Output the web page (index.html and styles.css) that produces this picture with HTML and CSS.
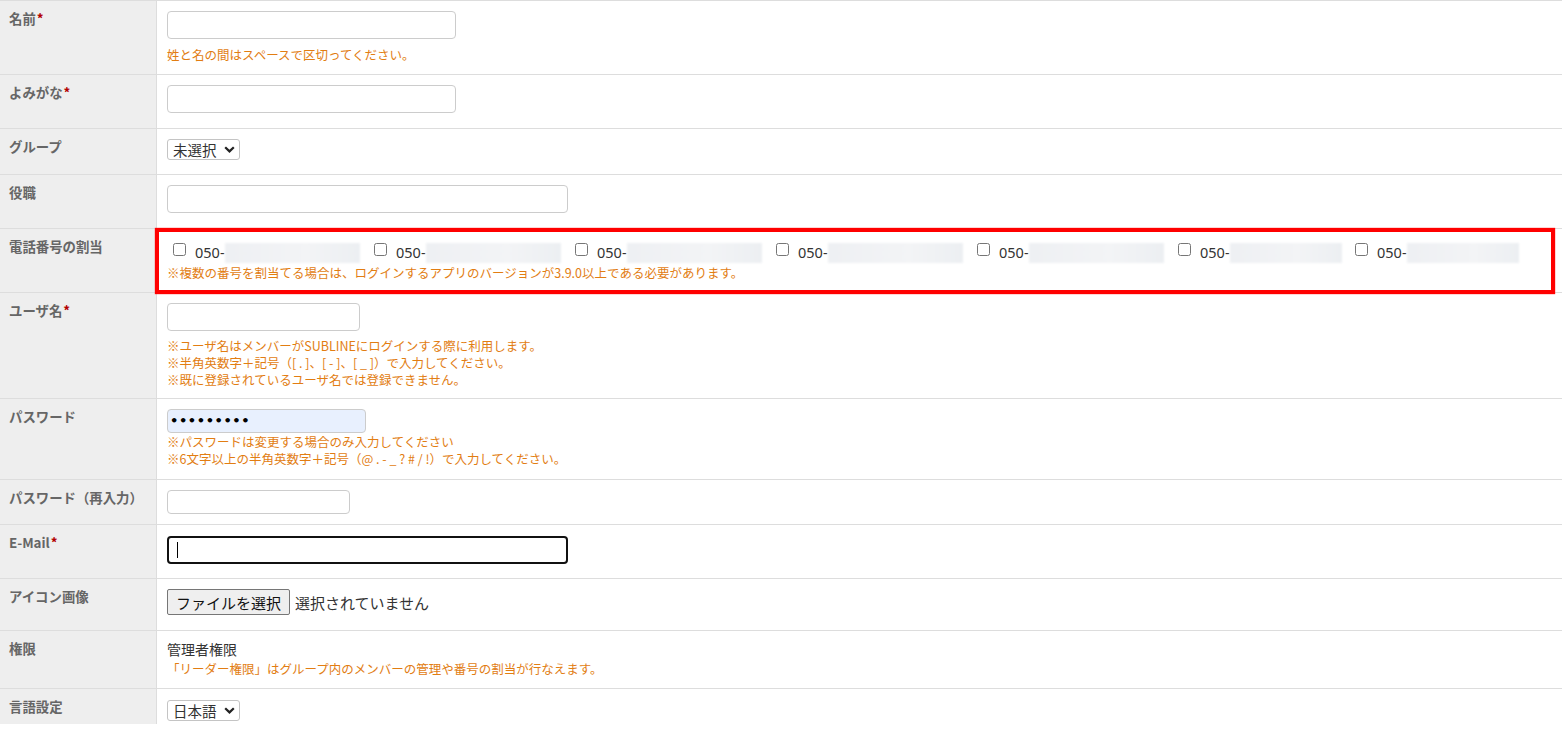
FILE: index.html
```html
<!DOCTYPE html>
<html lang="ja">
<head>
  <meta charset="UTF-8">
  <title>メンバー編集</title>
  <link rel="stylesheet" href="styles.css">
</head>
<body>
  <table class="form-table">
    <tr>
      <th>名前<span class="req">*</span></th>
      <td>
        <input type="text" class="field w-name">
        <p class="note single">姓と名の間はスペースで区切ってください。</p>
      </td>
    </tr>
    <tr>
      <th>よみがな<span class="req">*</span></th>
      <td><input type="text" class="field w-name solo"></td>
    </tr>
    <tr>
      <th>グループ</th>
      <td>
        <span class="select solo-select">未選択
          <svg width="11" height="7" viewBox="0 0 11 7"><path d="M1.2 1.2 L5.5 5.4 L9.8 1.2" fill="none" stroke="#222" stroke-width="2.2"/></svg>
        </span>
      </td>
    </tr>
    <tr>
      <th>役職</th>
      <td><input type="text" class="field w-wide solo"></td>
    </tr>
    <tr>
      <th>電話番号の割当</th>
      <td class="assign">
        <div class="phones">
          <label class="phone"><input type="checkbox"><span class="num">050-</span><span class="blur"></span></label>
          <label class="phone"><input type="checkbox"><span class="num">050-</span><span class="blur"></span></label>
          <label class="phone"><input type="checkbox"><span class="num">050-</span><span class="blur"></span></label>
          <label class="phone"><input type="checkbox"><span class="num">050-</span><span class="blur"></span></label>
          <label class="phone"><input type="checkbox"><span class="num">050-</span><span class="blur"></span></label>
          <label class="phone short"><input type="checkbox"><span class="num">050-</span><span class="blur"></span></label>
          <label class="phone short"><input type="checkbox"><span class="num">050-</span><span class="blur"></span></label>
        </div>
        <p class="note">※複数の番号を割当てる場合は、ログインするアプリのバージョンが3.9.0以上である必要があります。</p>
        <span class="mark"></span>
      </td>
    </tr>
    <tr>
      <th>ユーザ名<span class="req">*</span></th>
      <td>
        <input type="text" class="field w-user">
        <div class="notes spaced">
          <p>※ユーザ名はメンバーがSUBLINEにログインする際に利用します。</p>
          <p>※半角英数字＋記号（[ . ]、[ - ]、[ _ ]）で入力してください。</p>
          <p>※既に登録されているユーザ名では登録できません。</p>
        </div>
      </td>
    </tr>
    <tr>
      <th>パスワード</th>
      <td>
        <div class="field short-field w-pass autofill">•••••••••</div>
        <div class="notes tight">
          <p>※パスワードは変更する場合のみ入力してください</p>
          <p>※6文字以上の半角英数字＋記号（@ . - _ ? # / !）で入力してください。</p>
        </div>
      </td>
    </tr>
    <tr>
      <th>パスワード（再入力）</th>
      <td><input type="password" class="field short-field w-repass"></td>
    </tr>
    <tr>
      <th>E-Mail<span class="req">*</span></th>
      <td>
        <span class="focus-wrap">
          <input type="text" class="field w-wide focused">
          <span class="caret"></span>
        </span>
      </td>
    </tr>
    <tr>
      <th>アイコン画像</th>
      <td>
        <div class="file solo">
          <button type="button" class="file-btn">ファイルを選択</button>
          <span class="file-name">選択されていません</span>
        </div>
      </td>
    </tr>
    <tr>
      <th>権限</th>
      <td class="role">
        <p class="role-name">管理者権限</p>
        <p class="note">「リーダー権限」はグループ内のメンバーの管理や番号の割当が行なえます。</p>
      </td>
    </tr>
    <tr class="last">
      <th>言語設定</th>
      <td class="lang">
        <span class="select">日本語
          <svg width="11" height="7" viewBox="0 0 11 7"><path d="M1.2 1.2 L5.5 5.4 L9.8 1.2" fill="none" stroke="#222" stroke-width="2.2"/></svg>
        </span>
      </td>
    </tr>
  </table>
</body>
</html>
```

FILE: styles.css
```css
body {
  margin: 0;
  font-family: "Noto Sans CJK JP", "Noto Sans", sans-serif;
  color: #333;
  background: #fff;
  overflow: hidden;
}

.form-table {
  width: 100%;
  border-collapse: separate;
  border-spacing: 0;
}

.form-table th,
.form-table td {
  border-top: 1px solid #ddd;
  vertical-align: top;
  text-align: left;
  box-sizing: border-box;
}

.form-table th {
  width: 157px;
  padding: 7px 9px 8px;
  background: #eee;
  border-right: 1px solid #ddd;
  color: #666;
  font-size: 13.4px;
  line-height: 20px;
  font-weight: bold;
}

.form-table td {
  padding: 10px 10px 10px;
}

.req {
  color: #b30000;
  margin-left: 1px;
}

p {
  margin: 0;
}

.field {
  display: block;
  box-sizing: border-box;
  height: 28px;
  margin: 0;
  border: 1px solid #ccc;
  border-radius: 4px;
  background: #fff;
  font-family: inherit;
}

.short-field {
  height: 24px;
}

.w-name { width: 289px; }
.w-wide { width: 401px; }
.w-user { width: 193px; }
.w-pass { width: 199px; }
.w-repass { width: 183px; }

.solo {
  margin-bottom: 5px;
}

.autofill {
  background: #e8f0fe;
  font-family: "DejaVu Sans", sans-serif;
  font-size: 13px;
  font-weight: bold;
  line-height: 22px;
  letter-spacing: 0.6px;
  padding: 0 2px;
  color: #000;
}

.note,
.notes p {
  color: #e27d12;
  font-size: 12.5px;
}

.note {
  line-height: 18px;
}

.note.single {
  margin-top: 7px;
}

.notes p {
  line-height: 17px;
}

.notes.spaced {
  margin-top: 6px;
}

.notes.tight {
  margin-bottom: 2px;
}

.select {
  display: inline-flex;
  align-items: center;
  gap: 7px;
  box-sizing: border-box;
  height: 21px;
  padding: 0 4px 0 5px;
  border: 1px solid #c4c4c4;
  border-radius: 3px;
  font-size: 14.5px;
  color: #333;
  vertical-align: top;
}

.solo-select {
  margin-bottom: 4px;
}

/* phone number checkboxes */
.phones {
  display: flex;
  align-items: center;
  height: 25px;
}

.phone {
  display: flex;
  align-items: center;
  flex: none;
  width: 201px;
}

.phone.short {
  width: 177px;
}

.phone input {
  margin: 0 0 0 6px;
  width: 13px;
  height: 13px;
  position: relative;
  top: -2px;
}

.num {
  margin-left: 9px;
  font-family: "Noto Sans", sans-serif;
  font-size: 14.5px;
  color: #333;
}

.blur {
  display: inline-block;
  width: 135px;
  height: 20px;
  margin-top: 2px;
  background: linear-gradient(90deg, #eef0f3, #f3f4f6 60%, #eceff2);
  filter: blur(1.2px);
}

.phone.short .blur {
  width: 112px;
}

.assign {
  position: relative;
}

.mark {
  position: absolute;
  left: -2px;
  top: -1px;
  right: 7px;
  bottom: -2px;
  border: 4px solid #f00;
  box-shadow: 0 0 1px #f00;
}

/* focused e-mail */
.focus-wrap {
  display: block;
  position: relative;
  width: 401px;
  margin: 1px 0 4px;
}

.focused {
  border: 2px solid #111;
  border-radius: 4px;
}

.caret {
  position: absolute;
  left: 10px;
  top: 6px;
  width: 1px;
  height: 16px;
  background: #000;
}

/* file picker */
.file {
  display: flex;
  align-items: center;
  height: 26px;
}

.file-btn {
  box-sizing: border-box;
  height: 26px;
  width: 123px;
  padding: 0;
  border: 1px solid #767676;
  border-radius: 2px;
  background: #efefef;
  font-family: inherit;
  font-size: 15px;
  color: #111;
}

.file-name {
  margin-left: 5px;
  font-size: 15px;
  color: #333;
}

.role {
  padding-top: 8px !important;
}

.role-name {
  font-size: 14px;
  line-height: 21px;
  color: #333;
}

.lang {
  padding-top: 11px !important;
}

.last td,
.last th {
  padding-bottom: 0;
}
```
